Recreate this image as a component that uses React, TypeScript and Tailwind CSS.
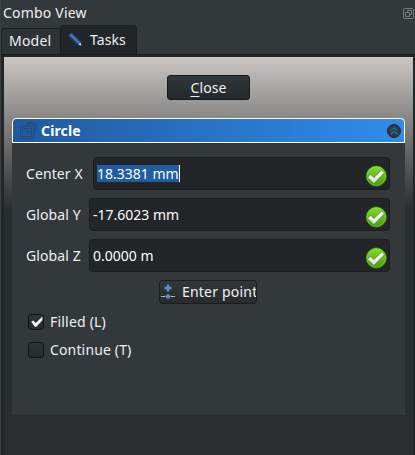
import type { ReactNode } from "react";

function CheckBadge({ id }: { id: string }) {
  return (
    <svg className="mt-[5px] h-[22px] w-[22px] shrink-0" viewBox="0 0 22 22">
      <defs>
        <linearGradient id={id} x1="0" y1="0" x2="0" y2="1">
          <stop offset="0" stopColor="#83df2c" />
          <stop offset="1" stopColor="#469b05" />
        </linearGradient>
        <linearGradient id={id + "w"} x1="0" y1="0" x2="0" y2="1">
          <stop offset="0" stopColor="#ffffff" />
          <stop offset="1" stopColor="#dededc" />
        </linearGradient>
      </defs>
      <circle cx="11.3" cy="11" r="10" fill={`url(#${id})`} stroke="#4ba00a" strokeWidth=".8" />
      <circle cx="11.3" cy="11" r="9.2" fill="none" stroke="#91e34b" strokeWidth="0.7" opacity="0.6" />
      <path
        d="M2.6 12.2 5.5 9.2 8.9 12.6 16.6 5 19.4 7.8 8.9 18.6Z"
        fill={`url(#${id}w)`}
        stroke="#4f7f27"
        strokeWidth="0.7"
      />
    </svg>
  );
}

function Field({ label, id, gap, children }: { label: string; id: string; gap: string; children: ReactNode }) {
  return (
    <div className="flex h-[33px] items-center">
      <span className={`whitespace-nowrap tracking-[0.1px] ${gap}`}>{label}</span>
      <div className="flex h-[33px] min-w-0 flex-1 items-center justify-between rounded-[4px] border border-[#1b1e20] bg-[#232629] pl-[3px] pr-[2px] text-[#fcfcfc]">
        {children}
        <CheckBadge id={id} />
      </div>
    </div>
  );
}

function Check({ label, checked, track }: { label: string; checked?: boolean; track: string }) {
  return (
    <div className="flex h-4 items-center gap-[6px]">
      <span className="flex h-4 w-4 items-center justify-center rounded-[3px] border border-[#111415] bg-linear-to-b from-[#2f3436] to-[#272b2d]">
        {checked && (
          <svg className="h-[14px] w-[14px]" viewBox="0 0 14 14">
            <path d="M2.2 6.8 4.2 5.5 6.8 8 13.4 1.6V5.2L7.3 11.8H5.8Z" fill="#f4f4f2" />
          </svg>
        )}
      </span>
      <span className={track}>{label}</span>
    </div>
  );
}

export default function App() {
  return (
    <div className="flex h-[455px] w-[415px] flex-col overflow-hidden border-l border-[#3e413b] bg-[#33383b] font-['Noto_Sans','Open_Sans',sans-serif] text-[14px] leading-[18px] text-[#eff0f1]">
      <header className="flex h-[25px] shrink-0 items-center justify-between pl-[2px] pr-[1px]">
        <span className="tracking-[0.2px]">Combo View</span>
        <svg className="h-[12px] w-[12px]" viewBox="0 0 12 12" fill="none" stroke="#777b7d">
          <rect x="1.5" y="1.5" width="10" height="10" rx="1.5" />
          <path d="M3.5 5.5h4v4h-4zM5.5 5.5v-2h4v4h-2" />
        </svg>
      </header>

      <nav className="flex h-[29px] shrink-0 items-end">
        <div className="flex h-[26px] w-[59px] items-center rounded-tl-[4px] border-l border-t border-[#1d2022] bg-[#2d3235] pb-[2px] pl-[7px]">
          <span className="tracking-[0.2px]">Model</span>
        </div>
        <div className="flex h-[29px] w-[77px] items-center rounded-t-[4px] border-x border-t border-[#1b1e20] bg-[#232629] pl-[7px]">
          <svg className="mb-[2px] mr-[8px] h-[14px] w-[14px] shrink-0" viewBox="0 0 14 14">
            <path d="M0 3.5 3.4 0 13.5 9.6 13.3 13.8H9.4Z" fill="#183a68" />
            <path d="M1.2 3.5 3.4 1.2 12.3 9.8 10.2 12.3Z" fill="#3569a7" />
            <path d="M2.3 2.6 11 11" stroke="#5c8dc4" strokeWidth=".8" />
            <path d="m10.6 12.6 1.8-2.2 1 3.2Z" fill="#eef1f3" />
          </svg>
          <span className="tracking-[0.1px]">Tasks</span>
        </div>
      </nav>

      <main className="flex min-h-0 flex-1 flex-col border-t border-[#1a1d1f] bg-[#232629] pl-[3px] pr-[2px] pt-[2px]">
        <div className="flex flex-1 flex-col bg-[#2a2e31] bg-[linear-gradient(180deg,#cbc7c4_0px,#8a8987_59px,#5b5c5c_103px,#2a2e31_152px)] px-[8px] pt-[18px]">
          <button className="flex h-[25px] w-[83px] shrink-0 items-center justify-center self-center rounded-[3px] border border-[#151819] bg-linear-to-b from-[#31373a] to-[#25292b]">
            <span className="tracking-[0.1px]">
              <span className="underline decoration-1 underline-offset-[3px]">C</span>lose
            </span>
          </button>

          <section className="mt-[18px] flex h-[297px] w-[393px] shrink-0 flex-col">
            <div className="flex h-[25px] shrink-0 items-center rounded-t-[4px] border border-white bg-linear-to-r from-[#205a9e] to-[#308cec] pl-[7px] pr-[3px]">
              <svg className="mr-[4px] h-[17px] w-[17px]" viewBox="0 0 17 17" fill="none">
                <g stroke="#1b426f" strokeWidth="1.8">
                  <path d="M1.5 5.5h11v10h-11z" />
                  <circle cx="11" cy="5.8" r="4.8" />
                </g>
                <g stroke="#366a9e" strokeWidth=".6">
                  <path d="M1.5 5.5h11v10h-11z" />
                  <circle cx="11" cy="5.8" r="4.8" />
                </g>
              </svg>
              <span className="flex-1 font-bold tracking-[0.15px] text-white">Circle</span>
              <svg className="h-[14px] w-[14px]" viewBox="0 0 14 14">
                <circle cx="7" cy="7" r="6.5" fill="#33383b" stroke="#222a32" />
                <path d="m3.5 6.7 3.5-3 3.5 3M3.5 10.5 7 7.3l3.5 3.2" fill="none" stroke="#2565ab" strokeWidth="1.5" />
              </svg>
            </div>

            <div className="flex flex-1 flex-col bg-[#33383b] pl-[14px] pr-[15px] pt-[14px]">
              <div className="flex flex-col gap-[8px]">
                <Field label="Center X" id="x" gap="w-[67px]">
                  <span className="flex h-[17px] items-center border-r border-white bg-[#215d9f]">18.3381 mm</span>
                </Field>
                <Field label="Global Y" id="y" gap="w-[63px]">
                  <span>-17.6023 mm</span>
                </Field>
                <Field label="Global Z" id="z" gap="w-[63px]">
                  <span>0.0000 m</span>
                </Field>
              </div>
              <button className="ml-[133px] mt-[8px] flex h-[24px] w-[98px] items-center overflow-hidden rounded-[3px] border border-[#1b1e20] bg-linear-to-b from-[#31363a] to-[#272b2d]">
                <svg className="mr-[6px] h-4 w-4 shrink-0" viewBox="0 0 16 16">
                  <path d="M1 12.5h14" stroke="#b9bcbd" strokeWidth="1" />
                  <path d="M8 .5v7M4.5 4h7" stroke="#5b8ecb" strokeWidth="2.4" />
                  <circle cx="8" cy="12.5" r="2.5" fill="#5b8ecb" stroke="#26394f" strokeWidth=".6" />
                </svg>
                <span className="whitespace-nowrap tracking-[0.2px]">Enter point</span>
              </button>
              <div className="ml-[2px] mt-[10px] flex flex-col gap-[12px]">
                <Check label="Filled (L)" checked track="tracking-[0.2px]" />
                <Check label="Continue (T)" track="tracking-[0.15px]" />
              </div>
            </div>
          </section>
        </div>
      </main>
    </div>
  );
}
